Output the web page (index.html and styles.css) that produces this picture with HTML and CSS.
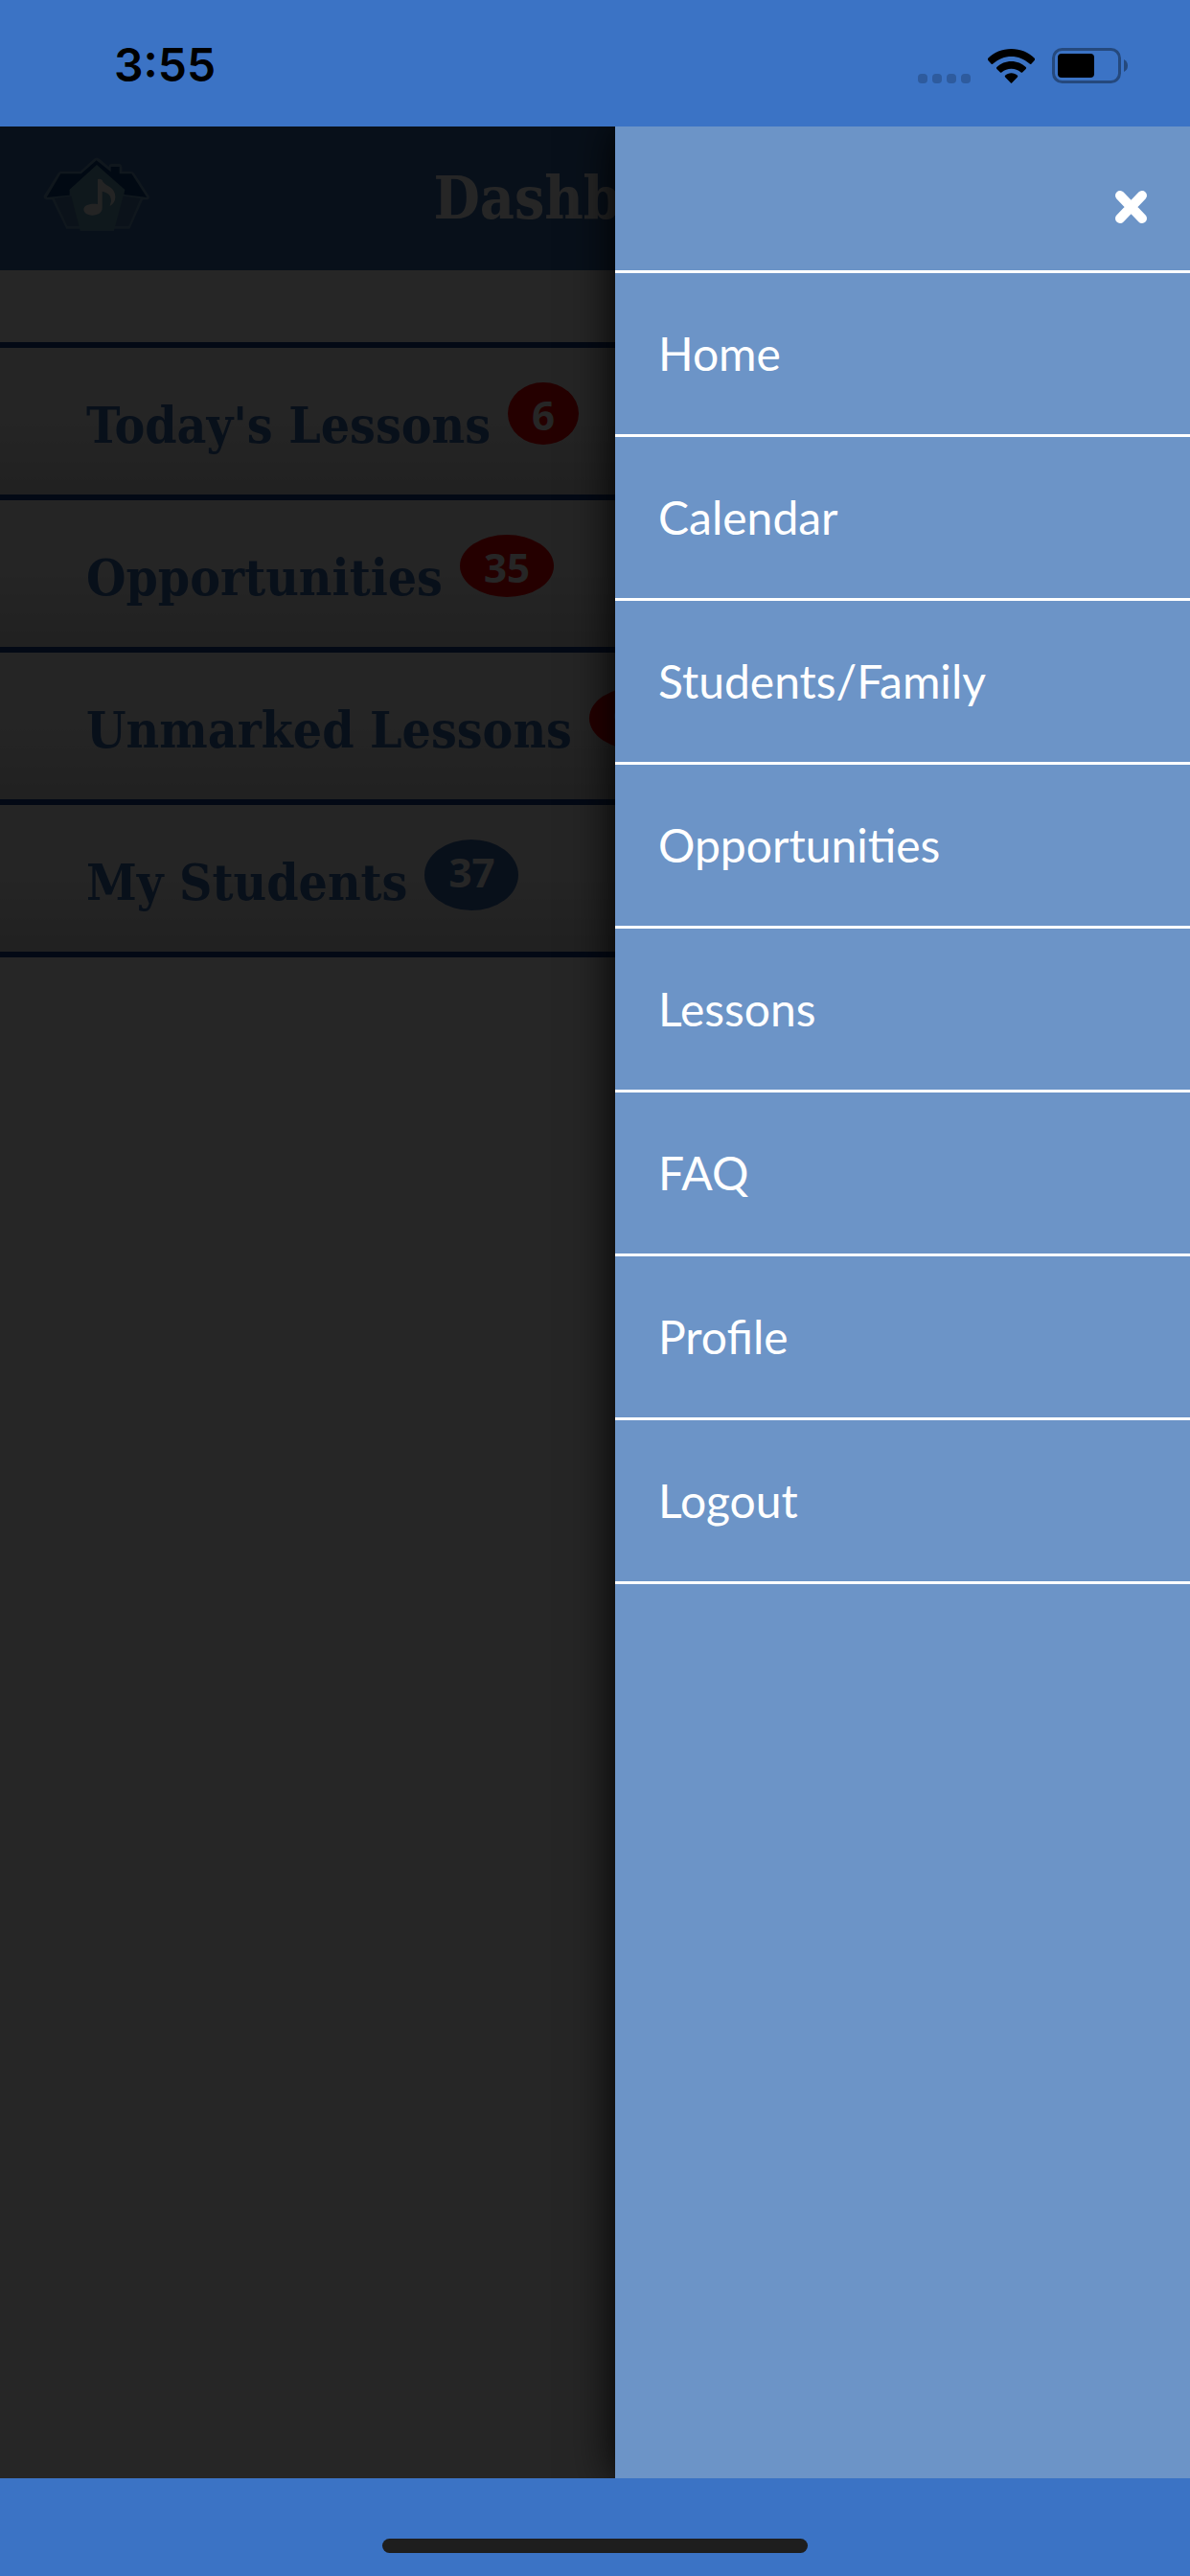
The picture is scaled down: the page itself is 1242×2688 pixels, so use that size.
FILE: index.html
```
<!DOCTYPE html>
<html lang="en">
<head>
  <meta charset="UTF-8" />
  <meta name="viewport" content="width=device-width, initial-scale=1" />
  <title>Dashboard</title>
  <link rel="stylesheet" href="styles.css">
</head>
<body>
  <!-- Status bar -->
  <div class="status-bar">
    <span class="clock">3:55</span>
    <div class="status-icons">
      <svg class="signal" width="55" height="10" viewBox="0 0 55 10" aria-hidden="true">
        <rect x="0" width="10" height="10" rx="4" />
        <rect x="15" width="10" height="10" rx="4" />
        <rect x="30" width="10" height="10" rx="4" />
        <rect x="45" width="10" height="10" rx="4" />
      </svg>
      <svg class="wifi" width="49" height="36" viewBox="0 0 147 108" aria-hidden="true">
        <path d="M73.500 0C102 0 128 11 147 30Q149 33 146 36L136 47Q133 49 130 46C114 32 95 24 73.500 24C52 24 33 32 17 46Q14 49 11 47L1 36Q-2 33 0 30C19 11 45 0 73.500 0Z" />
        <path d="M73.500 39C91 39 107 46 119 57Q122 60 119 63L109 73Q106 76 103 73C95 66 85 62 73.500 62C62 62 52 66 44 73Q41 76 38 73L28 63Q25 60 28 57C40 46 56 39 73.500 39Z" />
        <path d="M73.500 76C81 76 88 79 93 83Q95 86 92 89L76 106Q73.500 109 71 106L55 89Q52 86 54 83C59 79 66 76 73.500 76Z" />
      </svg>
      <svg class="battery" width="79" height="37" viewBox="0 0 79 37" aria-hidden="true">
        <rect class="battery-shell" x="1.500" y="1.500" width="69" height="34" rx="9" />
        <rect x="6" y="6" width="38" height="25" rx="4" />
        <path class="battery-tip" d="M75 12Q79 14 79 18.500Q79 23 75 25Z" />
      </svg>
    </div>
  </div>

  <div class="app">
    <!-- Dashboard -->
    <main class="page">
      <header class="page-header">
        <svg class="logo" width="112" height="78" viewBox="135 490 336 234" aria-hidden="true">
          <path class="logo-outline" d="M190 535H251L294 496Q302 489 312 496L341 521V518Q342 511 351 511H372Q381 512 382 521V535H408Q417 535 421 542L467 612Q469 623 458 623H447L406 714H357V721H251V714H208L163 623H146Q134 620 138 610L181 542Q185 535 190 535Z" />
          <path class="logo-wall" d="M170 619L232 610L258 706H211ZM440 619L376 610L352 706H403Z" />
          <path class="logo-roof" d="M190 542H254L302 500L347 536V520H374V542H412L460 616L388 607V592L303 515L218 592V609L146 616Z" />
          <path class="logo-door" d="M303 515L391 592L357 719H251L218 592Z" />
          <path class="logo-note" d="M306 559Q314 557 320 562C324 580 361 580 361 615Q360 634 344 643Q346 636 348 628C348 606 336 602 320 597V650C320 664 306 672 289 672C272 672 262 664 262 653C263 640 282 633 306 637Z" />
        </svg>
        <h1>Dashboard</h1>
      </header>

      <ul class="summary">
        <li><a href="#">Today's Lessons</a><span class="badge">6</span></li>
        <li><a href="#">Opportunities</a><span class="badge">35</span></li>
        <li><a href="#">Unmarked Lessons</a><span class="badge">95</span></li>
        <li><a href="#">My Students</a><span class="badge badge-info">37</span></li>
      </ul>
    </main>

    <div class="backdrop"></div>

    <!-- Side menu -->
    <nav class="drawer" aria-label="Menu">
      <div class="drawer-header">
        <button class="close-btn" type="button" aria-label="Close menu">
          <svg width="33" height="34" viewBox="0 0 33 34" aria-hidden="true">
            <path d="M5 5L28 29M28 5L5 29" />
          </svg>
        </button>
      </div>
      <a href="#">Home</a>
      <a href="#">Calendar</a>
      <a href="#">Students/Family</a>
      <a href="#">Opportunities</a>
      <a href="#">Lessons</a>
      <a href="#">FAQ</a>
      <a href="#">Profile</a>
      <a href="#">Logout</a>
    </nav>
  </div>

  <div class="home-bar">
    <div class="home-indicator"></div>
  </div>
</body>
</html>
```
FILE: styles.css
```
* {
  box-sizing: border-box;
}

body {
  margin: 0;
  min-height: 100vh;
  display: flex;
  flex-direction: column;
  background-color: #3b73c5;
  font-family: Lato, sans-serif;
}

/* Status bar */
.status-bar {
  height: 132px;
  padding: 4px 65px 0 119px;
  display: flex;
  justify-content: space-between;
  align-items: center;
}

.clock {
  font-family: Inter, sans-serif;
  font-size: 48px;
  font-weight: 600;
  line-height: 60px;
  color: #000;
}

.status-icons {
  display: flex;
  align-items: flex-end;
  gap: 18px;
}

.signal {
  fill: #2e5b9e;
}

.battery-shell {
  fill: none;
  stroke: #25497d;
  stroke-width: 3;
}

.battery-tip {
  fill: #25497d;
}

/* Dashboard */
.app {
  flex: 1;
  position: relative;
  overflow: hidden;
  background-color: #fff;
}

.page-header {
  height: 150px;
  padding: 0 45px;
  display: grid;
  grid-template-columns: 1fr auto 1fr;
  align-items: center;
  background-color: #3b6baf;
}

.logo {
  margin-bottom: 8px;
}

.logo-outline {
  fill: #6a9cc4;
}

.logo-wall {
  fill: #4a7aae;
}

.logo-roof {
  fill: #0d407f;
}

.logo-door {
  fill: #64a0b8;
}

.logo-note {
  fill: #f0f0f0;
}

h1 {
  margin: 0;
  font-family: "DejaVu Serif Condensed", "DejaVu Serif", serif;
  font-size: 62px;
  font-weight: bold;
  line-height: 72px;
  color: #fff;
}

.summary {
  margin: 75px 0 0;
  padding: 0;
  list-style: none;
  border-top: 6px solid #14418f;
}

.summary li {
  height: 159px;
  padding: 36px 90px 0;
  display: flex;
  align-items: flex-start;
  gap: 18px;
  border-bottom: 6px solid #14418f;
  background: linear-gradient(#f4f4f4 50%, #dadada);
}

.summary a {
  padding-top: 12px;
  font-family: "DejaVu Serif Condensed", "DejaVu Serif", serif;
  font-size: 53px;
  font-weight: bold;
  line-height: 64px;
  white-space: nowrap;
  color: #3b6baf;
  text-decoration: none;
}

.badge {
  padding: 5px 25px 3px;
  border-radius: 50%;
  background-color: #f80000;
  color: #fff;
  font-family: "Open Sans", sans-serif;
  font-size: 42px;
  font-weight: bold;
  line-height: 57px;
}

.badge-info {
  padding-bottom: 12px;
  background-color: #3b6baf;
}

.backdrop {
  position: absolute;
  inset: 0;
  background-color: rgba(0, 0, 0, 0.85);
}

/* Side menu */
.drawer {
  position: absolute;
  top: 0;
  right: 0;
  bottom: 0;
  width: 600px;
  background-color: #6c94c7;
  box-shadow: 0 0 45px #000;
}

.drawer-header {
  height: 153px;
  padding: 18px 45px 0;
  display: flex;
  justify-content: flex-end;
  align-items: center;
  border-bottom: 3px solid #fff;
}

.close-btn {
  padding: 0;
  border: none;
  background: none;
  line-height: 0;
  cursor: pointer;
}

.close-btn path {
  stroke: #fff;
  stroke-width: 10;
  stroke-linecap: round;
}

.drawer a {
  display: block;
  padding: 54px 45px;
  border-bottom: 3px solid #fff;
  font-size: 48px;
  line-height: 60px;
  color: #fff;
  text-decoration: none;
}

/* Home indicator */
.home-bar {
  height: 102px;
  padding-top: 63px;
}

.home-indicator {
  width: 444px;
  height: 15px;
  margin: 0 auto;
  border-radius: 8px;
  background-color: #1e1e1e;
}
```
